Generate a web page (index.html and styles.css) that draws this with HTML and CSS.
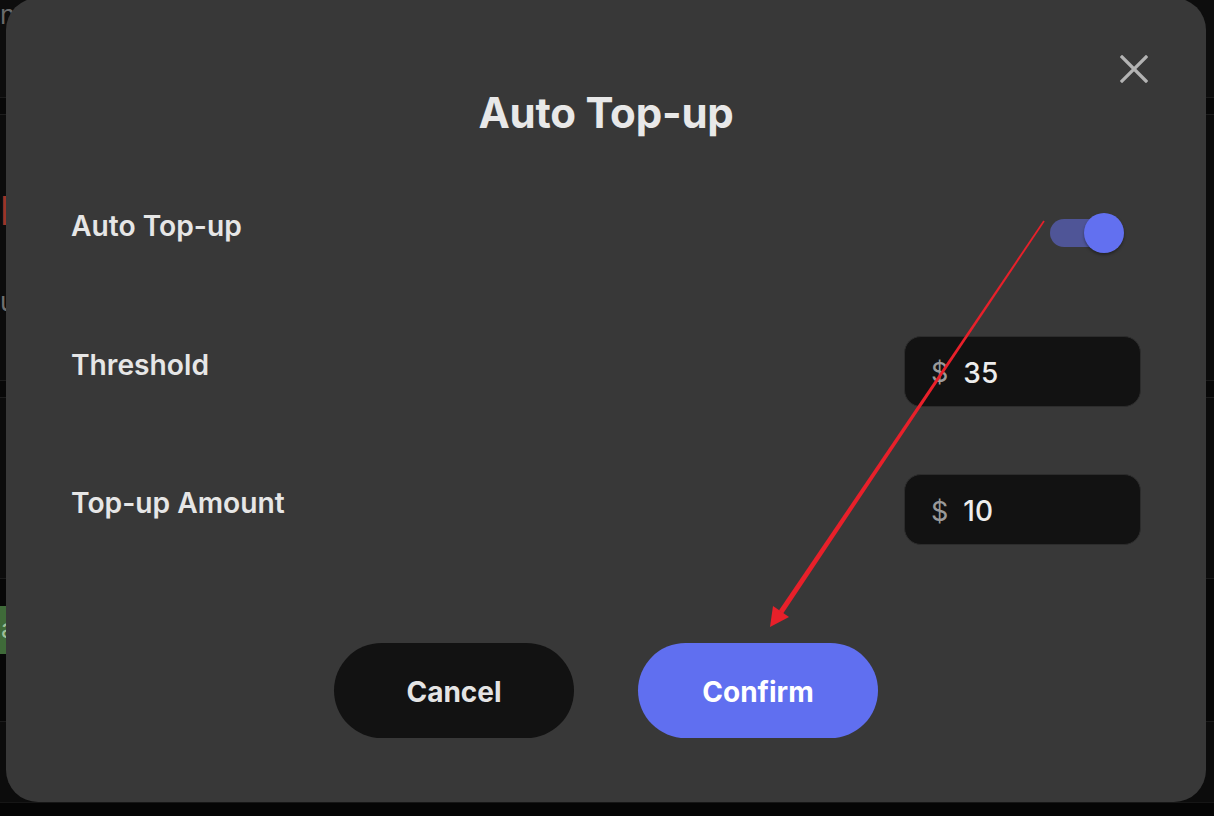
FILE: index.html
```html
<!DOCTYPE html>
<html lang="en">
<head>
<meta charset="utf-8">
<title>Auto Top-up</title>
<link rel="stylesheet" href="styles.css">
</head>
<body>
<div class="page">
  <div class="band band-top"><span class="ghost">nr</span></div>
  <div class="band band-thin"></div>
  <div class="band band-a">
    <span class="ghost-red">F</span>
    <span class="ghost ghost-u">u</span>
  </div>
  <div class="band band-thin"></div>
  <div class="band band-b"></div>
  <div class="band band-c"><span class="chip">a</span></div>
  <div class="band band-d"></div>
  <div class="band band-foot"></div>
</div>

<div class="modal" role="dialog" aria-labelledby="dlg-title">
  <button class="close" aria-label="Close">
    <svg viewBox="0 0 28 28" width="28" height="28"><path d="M2 2 L26 26 M26 2 L2 26" stroke="#b3b3b3" stroke-width="3.2" stroke-linecap="square" fill="none"/></svg>
  </button>
  <h2 class="title" id="dlg-title">Auto Top-up</h2>
  <div class="rows">
    <div class="row">
      <span class="label">Auto Top-up</span>
      <div class="control">
        <span class="switch"><span class="track"></span><span class="knob"></span></span>
      </div>
    </div>
    <div class="row">
      <span class="label">Threshold</span>
      <div class="field"><span class="cur">$</span><span class="val">35</span></div>
    </div>
    <div class="row">
      <span class="label">Top-up Amount</span>
      <div class="field"><span class="cur">$</span><span class="val">10</span></div>
    </div>
  </div>
  <div class="actions">
    <button class="btn btn-cancel">Cancel</button>
    <button class="btn btn-confirm">Confirm</button>
  </div>
</div>

<svg class="annot" viewBox="0 0 1214 816" width="1214" height="816">
  <polygon points="1044.7,221.4 783.1,613.4 778.9,610.6 1043.3,220.6" fill="#e8202a"/>
  <polygon points="770,627 773,606 789,617" fill="#e8202a"/>
</svg>
</body>
</html>
```

FILE: styles.css
```css
html, body {
  margin: 0;
  padding: 0;
  background: #0c0c0c;
  width: 1214px;
  height: 816px;
  overflow: hidden;
  font-family: "Inter", "Liberation Sans", sans-serif;
}

.page {
  display: flex;
  flex-direction: column;
  width: 1214px;
  height: 816px;
}

.band {
  box-sizing: border-box;
  position: relative;
  flex: none;
}
.band-top { height: 97px; background: #0d0d0d; }
.band-thin { height: 18px; background: #080808; border-top: 1px solid #1b1b1b; border-bottom: 1px solid #1d1d1d; }
.band-a { height: 265px; background: #0c0c0c; }
.band-b { height: 180px; background: #0c0c0c; }
.band-c { height: 143px; background: #070707; border-top: 1px solid #1b1b1b; }
.band-d { height: 81px; background: #0c0c0c; border-top: 1px solid #1b1b1b; }
.band-foot { height: 15px; background: #050505; border-top: 1px solid #161616; }

.ghost {
  display: block;
  color: #6a6a6a;
  font-size: 26px;
  line-height: 26px;
  padding-top: 2px;
}
.ghost-red {
  display: block;
  color: #9c3428;
  font-size: 40px;
  font-weight: 600;
  line-height: 40px;
  padding-top: 76px;
}
.ghost-u {
  padding-top: 58px;
  color: #707070;
}
.chip {
  display: inline-block;
  margin-top: 27px;
  padding: 0 12px 0 1px;
  height: 48px;
  line-height: 46px;
  background: #3f6a39;
  color: #9fbf98;
  font-size: 26px;
  border-radius: 0 6px 6px 0;
}

.modal {
  position: absolute;
  left: 6px;
  top: -2px;
  width: 1200px;
  box-sizing: border-box;
  padding: 90.5px 65px 64px;
  background: #383838;
  border-radius: 32px;
  color: #e6e6e6;
}

.close {
  position: absolute;
  top: 57px;
  right: 58px;
  width: 28px;
  height: 28px;
  padding: 0;
  margin: 0;
  border: 0;
  background: transparent;
  display: block;
}
.close svg { display: block; }

.title {
  margin: 0;
  text-align: center;
  font-size: 42px;
  line-height: 48px;
  font-weight: 700;
  color: #e8e8e8;
  letter-spacing: -0.2px;
}

.rows {
  margin-top: 60.5px;
  display: flex;
  flex-direction: column;
  gap: 67.5px;
}

.row {
  display: flex;
  justify-content: space-between;
  align-items: flex-start;
  height: 71px;
}

.label {
  margin-top: 9px;
  font-size: 28.2px;
  line-height: 40px;
  font-weight: 600;
  color: #e6e6e6;
}

.control {
  height: 71px;
  display: flex;
  align-items: center;
  padding-right: 17px;
}

.switch {
  position: relative;
  display: block;
  width: 74px;
  height: 40px;
}
.track {
  position: absolute;
  left: 0;
  top: 6px;
  width: 70px;
  height: 28px;
  border-radius: 14px;
  background: #4f5597;
}
.knob {
  position: absolute;
  left: 34px;
  top: 0;
  width: 40px;
  height: 40px;
  border-radius: 50%;
  background: #6270f0;
  box-shadow: 0 2px 3px rgba(0,0,0,0.35);
}

.field {
  box-sizing: border-box;
  width: 237px;
  height: 71px;
  border-radius: 17px;
  background: #121212;
  border: 1px solid #2c2c2c;
  display: flex;
  align-items: center;
  padding-left: 26px;
  padding-top: 3px;
  gap: 15px;
}
.cur {
  font-size: 27px;
  color: #9a9a9a;
  font-weight: 400;
}
.val {
  font-size: 28px;
  color: #ededed;
  font-weight: 500;
}

.actions {
  margin-top: 98px;
  display: flex;
  justify-content: center;
  gap: 64px;
}

.btn {
  width: 240px;
  height: 95px;
  border-radius: 48px;
  border: 0;
  font-family: "Inter", "Liberation Sans", sans-serif;
  font-size: 28px;
  font-weight: 700;
  padding: 2px 0 0;
}
.btn-cancel { background: #121212; color: #e4e4e4; }
.btn-confirm { background: #606ff0; color: #ffffff; }

.annot {
  position: absolute;
  left: 0;
  top: 0;
  pointer-events: none;
}
```
